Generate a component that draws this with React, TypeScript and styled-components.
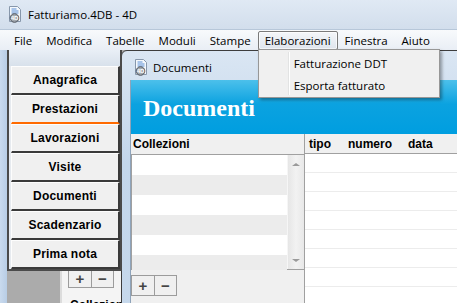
import React from 'react'
import styled, { createGlobalStyle } from 'styled-components'

const GlobalStyle = createGlobalStyle`
  html, body { margin: 0; padding: 0; background: #ababab; }
  body { font-family: "Open Sans", "Liberation Sans", sans-serif; }
  * { box-sizing: border-box; }
`

const Screen = styled.div`
  width: 457px;
  height: 303px;
  overflow: hidden;
  display: flex;
  flex-direction: column;
  background: #c4d6ea;
`

const TitleBar = styled.div`
  height: 29px;
  flex: none;
  display: flex;
  align-items: center;
  gap: 5px;
  padding-left: 7px;
  background: linear-gradient(#e0e9f4, #d2deec);
  font-size: 11.5px;
  color: #000;
`

const MenuBar = styled.div`
  position: relative;
  z-index: 10;
  height: 21px;
  flex: none;
  display: flex;
  align-items: flex-end;
  padding: 0 0 0 7px;
  border-top: 1px solid #b7c7d9;
  background: linear-gradient(#f8fafc, #e9eef5);
  font-size: 11.5px;
`

const MenuItem = styled.div<{ $open?: boolean }>`
  position: relative;
  height: 19px;
  display: flex;
  align-items: center;
  padding: 0 6px;
  border: 1px solid ${p => (p.$open ? '#7a7a7a' : 'transparent')};
  border-radius: 2px;
  background: ${p => (p.$open ? 'linear-gradient(#f4f6f9, #dfe5ed)' : 'none')};
  box-shadow: ${p => (p.$open ? 'inset 0 0 0 1px rgba(255,255,255,0.7)' : 'none')};
`

const Dropdown = styled.div`
  position: absolute;
  left: -1px;
  top: 17px;
  width: 182px;
  height: 49px;
  padding-top: 2px;
  background: #f0f0f0;
  border: 1px solid #979797;
  box-shadow: 2px 2px 3px rgba(0, 0, 0, 0.35);
  &::before {
    content: '';
    position: absolute;
    left: 29px;
    top: 2px;
    bottom: 2px;
    width: 1px;
    background: #e2e3e3;
    box-shadow: 1px 0 0 #fff;
  }
`

const DropItem = styled.div`
  height: 22px;
  display: flex;
  align-items: center;
  padding-left: 35px;
  white-space: nowrap;
`

const Workspace = styled.div`
  flex: 1;
  display: flex;
  min-height: 0;
`

const AppEdge = styled.div`
  width: 7px;
  flex: none;
  background: linear-gradient(90deg, #c9daee, #b8cde5);
`

const Desk = styled.div`
  position: relative;
  flex: 1;
  background: #ababab;
`

const BackWindow = styled.div`
  position: absolute;
  left: 53px;
  top: 210px;
  width: 70px;
  height: 60px;
  background: #f4f4f4;
  border-left: 2px solid #dcdcdc;
  padding: 7px 0 0 6px;
`

const SmallButtons = styled.div`
  display: inline-flex;
  border: 1px solid #9c9c9c;
  background: #f0f0f0;
`

const SmallButton = styled.div<{ $h: number }>`
  width: 22px;
  height: ${p => p.$h}px;
  display: flex;
  align-items: center;
  justify-content: center;
  font-family: "Liberation Sans", sans-serif;
  font-weight: bold;
  font-size: 15px;
  color: #444;
  & + & { border-left: 1px solid #9c9c9c; }
`

const BackLabel = styled.div`
  margin: 9px 0 0 2px;
  font-family: "Liberation Sans", sans-serif;
  font-weight: bold;
  font-size: 12px;
`

const Palette = styled.div`
  position: absolute;
  left: 0;
  top: 0;
  width: 115px;
  height: 221px;
  border: 2px solid #4a4a4a;
  border-top: none;
  background: #e6eaef;
  padding: 0 0 0 2px;
  z-index: 3;
`

const PaletteHead = styled.div`
  height: 16px;
  margin-left: -2px;
  background: linear-gradient(#e9eff6, #d8e1eb);
`

const PaletteButton = styled.div<{ $active?: boolean }>`
  width: 109px;
  height: 29px;
  display: flex;
  align-items: center;
  justify-content: center;
  background: #f0f0f0;
  border-top: 1px solid #fdfdfd;
  border-left: 1px solid #fdfdfd;
  border-right: 2px solid #3a3a3a;
  border-bottom: 2px solid ${p => (p.$active ? '#ff6a00' : '#3a3a3a')};
  font-family: "Liberation Sans", sans-serif;
  font-weight: bold;
  font-size: 12px;
  letter-spacing: 0.2px;
  color: #000;
`

const DocWindow = styled.div`
  position: absolute;
  left: 114px;
  top: 0;
  right: -30px;
  bottom: -30px;
  display: flex;
  flex-direction: column;
  border: 1px solid #3d3d3d;
  border-radius: 6px 6px 0 0;
  background: linear-gradient(#dae6f3, #c3d6eb 40%, #c7d9ec);
  z-index: 2;
`

const WinTitle = styled.div`
  height: 29px;
  flex: none;
  display: flex;
  align-items: center;
  gap: 4px;
  padding: 3px 0 0 11px;
  font-size: 11.5px;
`

const WinBody = styled.div`
  flex: 1;
  display: flex;
  flex-direction: column;
  margin-left: 8px;
  border-left: 1px solid #8ea3ba;
  background: #f0f0f0;
`

const Banner = styled.div`
  height: 54px;
  flex: none;
  padding: 14px 0 0 12px;
  background: linear-gradient(#4cc0eb, #0ba2e0 45%, #009ee0);
  font-family: "Liberation Serif", serif;
  font-weight: bold;
  font-size: 24px;
  line-height: 28px;
  color: #fff;
`

const Grid = styled.div`
  flex: 1;
  display: flex;
`

const LeftPane = styled.div`
  width: 173px;
  flex: none;
  display: flex;
  flex-direction: column;
`

const PaneHead = styled.div`
  height: 20px;
  display: flex;
  align-items: center;
  padding-left: 2px;
  background: #f0f0f0;
  font-family: "Liberation Sans", sans-serif;
  font-weight: bold;
  font-size: 12px;
`

const ListBox = styled.div`
  height: 116px;
  display: flex;
  border: 1px solid #a0a0a0;
  border-right: none;
  background: #fff;
`

const ListRows = styled.div`
  flex: 1;
`

const ListRow = styled.div<{ $alt: boolean }>`
  height: 20px;
  background: ${p => (p.$alt ? '#ececec' : '#fff')};
`

const ScrollBar = styled.div`
  width: 17px;
  display: flex;
  flex-direction: column;
  justify-content: space-between;
  align-items: center;
  padding: 8px 0 7px;
  background: linear-gradient(90deg, #e6e6e6, #f2f2f2 50%, #e8e8e8);
  border-left: 1px solid #f6f6f6;
`

const Arrow = styled.div<{ $down?: boolean }>`
  width: 0;
  height: 0;
  border-left: 4px solid transparent;
  border-right: 4px solid transparent;
  ${p => (p.$down ? 'border-top: 3px solid #9a9a9a;' : 'border-bottom: 3px solid #9a9a9a;')}
`

const PaneFooter = styled.div`
  flex: 1;
  padding-top: 4px;
  background: #f0f0f0;
`

const RightPane = styled.div`
  flex: 1;
  border-left: 1px solid #a0a0a0;
  background: #fff;
`

const TableHead = styled.div`
  height: 20px;
  display: flex;
  align-items: center;
  padding-left: 4px;
  background: #f0f0f0;
  border-bottom: 1px solid #a0a0a0;
  font-family: "Liberation Sans", sans-serif;
  font-weight: bold;
  font-size: 12px;
`

const HeadCell = styled.div<{ $w: number }>`
  width: ${p => p.$w}px;
  flex: none;
`

const TableRow = styled.div`
  height: 19px;
  border-bottom: 1px solid #ececec;
`

const DocIcon = () => (
  <svg width="16" height="17" viewBox="0 0 16 17">
    <path d="M2.5 0.5h8l3 3v12h-11z" fill="#f4f8fc" stroke="#8797ab" />
    <path d="M4.5 3h5M4.5 5h7M4.5 7h7" stroke="#5a8fd6" strokeWidth="1" />
    <circle cx="7.5" cy="12" r="4.3" fill="#a3a9b0" stroke="#4f555c" />
    <text x="7.5" y="14.3" fontSize="6" fontWeight="bold" fill="#fff" textAnchor="middle" fontFamily="Liberation Sans, sans-serif">4D</text>
  </svg>
)

const menus = ['File', 'Modifica', 'Tabelle', 'Moduli', 'Stampe', 'Elaborazioni', 'Finestra', 'Aiuto']
const buttons = ['Anagrafica', 'Prestazioni', 'Lavorazioni', 'Visite', 'Documenti', 'Scadenzario', 'Prima nota']

export default function App() {
  return (
    <Screen>
      <GlobalStyle />
      <TitleBar>
        <DocIcon />
        <span>Fatturiamo.4DB - 4D</span>
      </TitleBar>
      <MenuBar>
        {menus.map(m => (
          <MenuItem key={m} $open={m === 'Elaborazioni'}>
            {m}
            {m === 'Elaborazioni' && (
              <Dropdown>
                <DropItem>Fatturazione DDT</DropItem>
                <DropItem>Esporta fatturato</DropItem>
              </Dropdown>
            )}
          </MenuItem>
        ))}
      </MenuBar>
      <Workspace>
        <AppEdge />
        <Desk>
          <BackWindow>
            <SmallButtons>
              <SmallButton $h={16}>+</SmallButton>
              <SmallButton $h={16}>−</SmallButton>
            </SmallButtons>
            <BackLabel>Collezioni</BackLabel>
          </BackWindow>

          <DocWindow>
            <WinTitle>
              <DocIcon />
              <span>Documenti</span>
            </WinTitle>
            <WinBody>
              <Banner>Documenti</Banner>
              <Grid>
                <LeftPane>
                  <PaneHead>Collezioni</PaneHead>
                  <ListBox>
                    <ListRows>
                      {[0, 1, 2, 3, 4, 5].map(i => (
                        <ListRow key={i} $alt={i % 2 === 1} />
                      ))}
                    </ListRows>
                    <ScrollBar>
                      <Arrow />
                      <Arrow $down />
                    </ScrollBar>
                  </ListBox>
                  <PaneFooter>
                    <SmallButtons>
                      <SmallButton $h={19}>+</SmallButton>
                      <SmallButton $h={19}>−</SmallButton>
                    </SmallButtons>
                  </PaneFooter>
                </LeftPane>
                <RightPane>
                  <TableHead>
                    <HeadCell $w={39}>tipo</HeadCell>
                    <HeadCell $w={60}>numero</HeadCell>
                    <HeadCell $w={50}>data</HeadCell>
                  </TableHead>
                  {[0, 1, 2, 3, 4, 5, 6, 7].map(i => (
                    <TableRow key={i} />
                  ))}
                </RightPane>
              </Grid>
            </WinBody>
          </DocWindow>

          <Palette>
            <PaletteHead />
            {buttons.map(b => (
              <PaletteButton key={b} $active={b === 'Prestazioni'}>
                {b}
              </PaletteButton>
            ))}
          </Palette>
        </Desk>
      </Workspace>
    </Screen>
  )
}
